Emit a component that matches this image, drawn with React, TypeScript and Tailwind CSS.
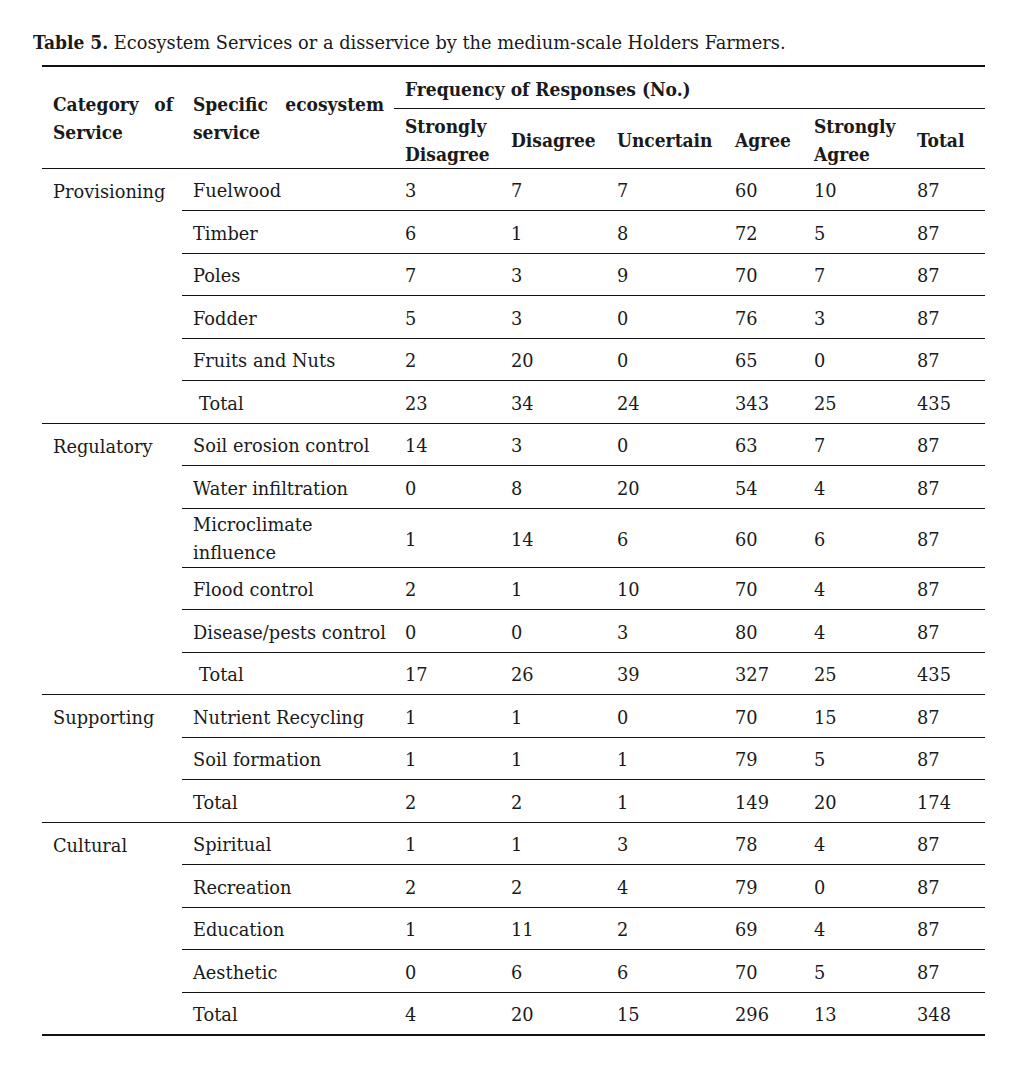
import React from 'react'

type Row = { name: React.ReactNode; key: string; v: number[]; indent?: boolean; tall?: boolean }
type Group = { category: string; rows: Row[] }

const row = (name: string, v: number[], indent?: boolean): Row => ({ name, key: name, v, indent })

const groups: Group[] = [
  {
    category: 'Provisioning',
    rows: [
      row('Fuelwood', [3, 7, 7, 60, 10, 87]),
      row('Timber', [6, 1, 8, 72, 5, 87]),
      row('Poles', [7, 3, 9, 70, 7, 87]),
      row('Fodder', [5, 3, 0, 76, 3, 87]),
      row('Fruits and Nuts', [2, 20, 0, 65, 0, 87]),
      row('Total', [23, 34, 24, 343, 25, 435], true),
    ],
  },
  {
    category: 'Regulatory',
    rows: [
      row('Soil erosion control', [14, 3, 0, 63, 7, 87]),
      row('Water infiltration', [0, 8, 20, 54, 4, 87]),
      {
        name: (
          <>
            Microclimate
            <br />
            influence
          </>
        ),
        key: 'Microclimate',
        v: [1, 14, 6, 60, 6, 87],
        tall: true,
      },
      row('Flood control', [2, 1, 10, 70, 4, 87]),
      row('Disease/pests control', [0, 0, 3, 80, 4, 87]),
      row('Total', [17, 26, 39, 327, 25, 435], true),
    ],
  },
  {
    category: 'Supporting',
    rows: [
      row('Nutrient Recycling', [1, 1, 0, 70, 15, 87]),
      row('Soil formation', [1, 1, 1, 79, 5, 87]),
      row('Total', [2, 2, 1, 149, 20, 174]),
    ],
  },
  {
    category: 'Cultural',
    rows: [
      row('Spiritual', [1, 1, 3, 78, 4, 87]),
      row('Recreation', [2, 2, 4, 79, 0, 87]),
      row('Education', [1, 11, 2, 69, 4, 87]),
      row('Aesthetic', [0, 6, 6, 70, 5, 87]),
      row('Total', [4, 20, 15, 296, 13, 348]),
    ],
  },
]

const bold = { fontFamily: '"DejaVu Serif Condensed", "DejaVu Serif", serif' }

export default function App() {
  return (
    <div
      className="w-[1025px] h-[1077px] bg-white text-[#1a1a1a] text-[17.8px] leading-[28px]"
      style={{ fontFamily: '"DejaVu Serif", serif' }}
    >
      <div className="pl-[33px] pt-[28px] whitespace-nowrap">
        <span className="font-bold text-[19px]" style={bold}>
          Table 5.
        </span>{' '}
        Ecosystem Services or a disservice by the medium-scale Holders Farmers.
      </div>

      <table className="ml-[42px] mt-[8px] w-[943px] border-collapse table-fixed">
        <colgroup>
          <col className="w-[140px]" />
          <col className="w-[212px]" />
          <col className="w-[106px]" />
          <col className="w-[106px]" />
          <col className="w-[118px]" />
          <col className="w-[79px]" />
          <col className="w-[103px]" />
          <col className="w-[79px]" />
        </colgroup>
        <thead className="font-bold text-[19px]" style={bold}>
          <tr className="h-[42px] border-t-2 border-[#111]">
            <td rowSpan={2} className="pl-[11px] pr-[9px] pt-[2px] align-middle border-b border-[#111]">
              <div className="text-justify">Category of Service</div>
            </td>
            <td rowSpan={2} className="pl-[11px] pr-[10px] pt-[2px] align-middle border-b border-[#111]">
              <div className="text-justify">Specific ecosystem service</div>
            </td>
            <td colSpan={6} className="pl-[11px] pt-[4px] align-middle border-b border-[#111]">
              Frequency of Responses (No.)
            </td>
          </tr>
          <tr className="h-[59px] border-b border-[#111]">
            <td className="pl-[11px] pt-[3px] align-middle">Strongly Disagree</td>
            <td className="pl-[11px] pt-[3px] align-middle">Disagree</td>
            <td className="pl-[11px] pt-[3px] align-middle">Uncertain</td>
            <td className="pl-[11px] pt-[3px] align-middle">Agree</td>
            <td className="pl-[11px] pt-[3px] align-middle">Strongly Agree</td>
            <td className="pl-[11px] pt-[3px] align-middle">Total</td>
          </tr>
        </thead>
        <tbody>
          {groups.map((g, gi) => {
            const last = gi === groups.length - 1
            return g.rows.map((r, ri) => {
              const edge =
                last && ri === g.rows.length - 1 ? 'border-b-2 border-[#111]' : 'border-b border-[#111]'
              return (
                <tr key={g.category + r.key} className={r.tall ? 'h-[59px]' : 'h-[42.5px]'}>
                  {ri === 0 && (
                    <td
                      rowSpan={g.rows.length}
                      className={
                        'pl-[11px] pt-[9px] align-top whitespace-nowrap ' +
                        (last ? 'border-b-2 border-[#111]' : 'border-b border-[#111]')
                      }
                    >
                      {g.category}
                    </td>
                  )}
                  <td
                    className={
                      'align-middle whitespace-nowrap ' +
                      (r.tall ? 'pt-[2px] ' : 'pt-[4px] ') +
                      (r.indent ? 'pl-[17px] ' : 'pl-[11px] ') +
                      edge
                    }
                  >
                    {r.name}
                  </td>
                  {r.v.map((c, ci) => (
                    <td key={ci} className={'align-middle pt-[4px] pl-[11px] ' + edge}>
                      {c}
                    </td>
                  ))}
                </tr>
              )
            })
          })}
        </tbody>
      </table>
    </div>
  )
}
